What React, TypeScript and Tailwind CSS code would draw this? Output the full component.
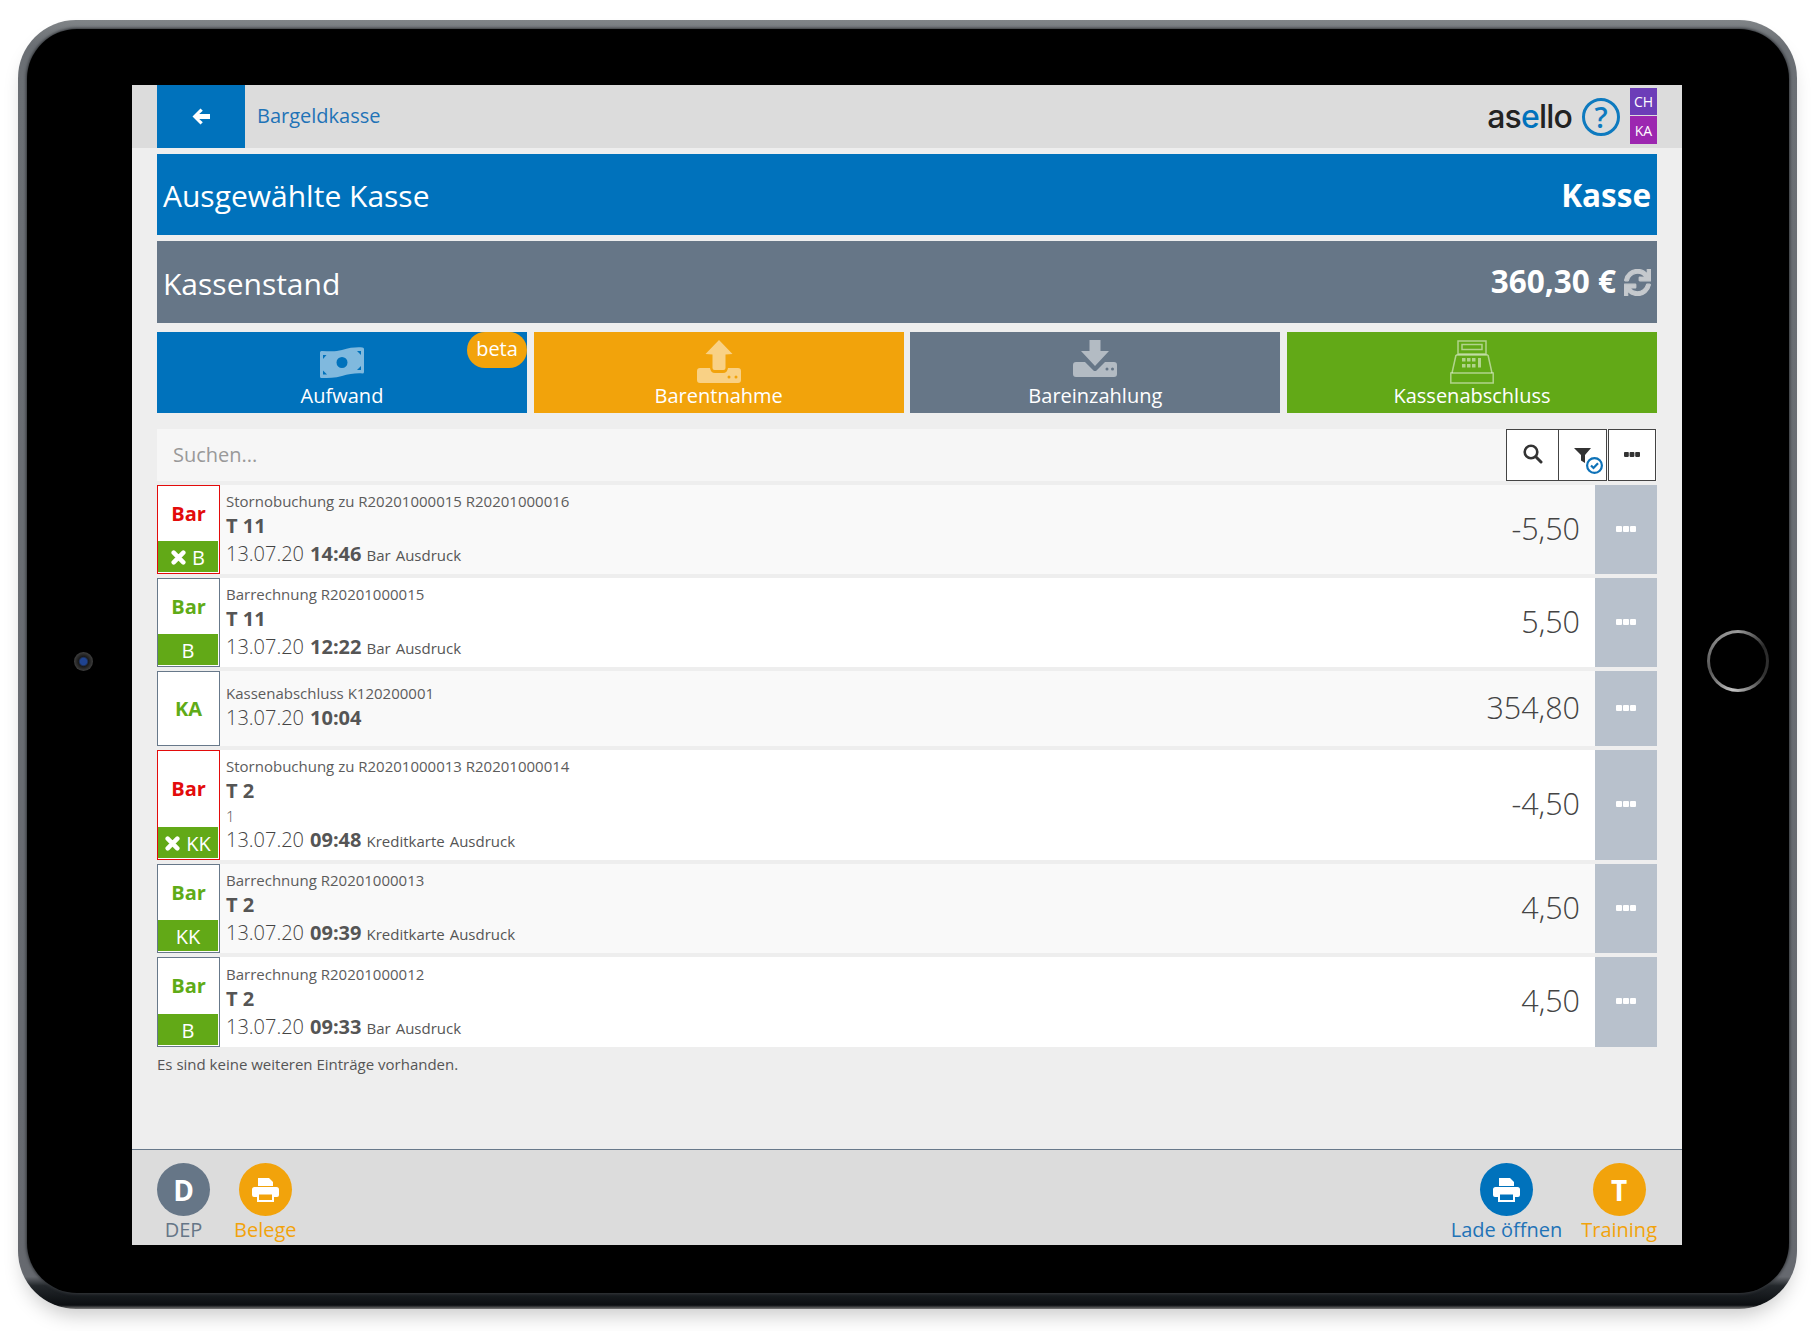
import React from 'react';
import { FaSync } from 'react-icons/fa';

type Booking = {
  tone: 'red' | 'green';
  head: string;
  pay?: string;
  storno?: boolean;
  title: string;
  ref?: string;
  note?: string;
  date: string;
  time: string;
  tags?: string[];
  amount: string;
  h: string;
  bg: string;
};

const bookings: Booking[] = [
  { tone: 'red', head: 'Bar', pay: 'B', storno: true, title: 'Stornobuchung zu R20201000015 R20201000016', ref: 'T 11', date: '13.07.20', time: '14:46', tags: ['Bar', 'Ausdruck'], amount: '-5,50', h: 'h-[89px]', bg: 'bg-[#f9f9f9]' },
  { tone: 'green', head: 'Bar', pay: 'B', title: 'Barrechnung R20201000015', ref: 'T 11', date: '13.07.20', time: '12:22', tags: ['Bar', 'Ausdruck'], amount: '5,50', h: 'h-[89px]', bg: 'bg-white' },
  { tone: 'green', head: 'KA', title: 'Kassenabschluss K120200001', date: '13.07.20', time: '10:04', amount: '354,80', h: 'h-[75px]', bg: 'bg-[#f9f9f9]' },
  { tone: 'red', head: 'Bar', pay: 'KK', storno: true, title: 'Stornobuchung zu R20201000013 R20201000014', ref: 'T 2', note: '1', date: '13.07.20', time: '09:48', tags: ['Kreditkarte', 'Ausdruck'], amount: '-4,50', h: 'h-[110px]', bg: 'bg-white' },
  { tone: 'green', head: 'Bar', pay: 'KK', title: 'Barrechnung R20201000013', ref: 'T 2', date: '13.07.20', time: '09:39', tags: ['Kreditkarte', 'Ausdruck'], amount: '4,50', h: 'h-[89px]', bg: 'bg-[#f9f9f9]' },
  { tone: 'green', head: 'Bar', pay: 'B', title: 'Barrechnung R20201000012', ref: 'T 2', date: '13.07.20', time: '09:33', tags: ['Bar', 'Ausdruck'], amount: '4,50', h: 'h-[90px]', bg: 'bg-white' },
];

function Dots({ className }: { className: string }) {
  return (
    <svg viewBox="0 0 20 6" className={className} fill="currentColor">
      <rect x="0" width="6" height="6" rx="1" />
      <rect x="7" width="6" height="6" rx="1" />
      <rect x="14" width="6" height="6" rx="1" />
    </svg>
  );
}

function ArrowIcon({ className }: { className: string }) {
  return (
    <svg viewBox="0 0 18 17" className={className} fill="currentColor">
      <path d="M8.500 0.500 L10.800 2.800 L7.200 6 H18 V11 H7.200 L10.800 14.200 L8.500 16.500 L0.500 8.500 Z" />
    </svg>
  );
}

function CrossIcon({ className }: { className: string }) {
  return (
    <svg viewBox="0 0 14 14" className={className} fill="none" stroke="currentColor" strokeWidth="4.200" strokeLinecap="round">
      <path d="M2.500 2.500 L11.500 11.500 M11.500 2.500 L2.500 11.500" />
    </svg>
  );
}

function PrintIcon({ className }: { className: string }) {
  return (
    <svg viewBox="0 0 27 24" className={className} fill="currentColor">
      <path d="M6 0 H17 L21 4 V8 H6 Z" />
      <path fillRule="evenodd" d="M2.500 9 H24.500 A2.500 2.500 0 0 1 27 11.500 V17 A2 2 0 0 1 25 19 H22 V24 H5 V19 H2 A2 2 0 0 1 0 17 V11.500 A2.500 2.500 0 0 1 2.500 9 Z M7 16.500 V22 H20 V16.500 Z" />
    </svg>
  );
}

function SearchIcon({ className }: { className: string }) {
  return (
    <svg viewBox="0 0 20 20" className={className} fill="none" stroke="currentColor">
      <circle cx="8" cy="8" r="6.300" strokeWidth="2.600" />
      <path d="M12.800 12.800 L18 18" strokeWidth="3" strokeLinecap="round" />
    </svg>
  );
}

function MoneyIcon({ className }: { className: string }) {
  return (
    <svg viewBox="0 0 44 31" className={className} fill="currentColor">
      <path
        fillRule="evenodd"
        d="M1.500 4 C9 4 15 5 22 3 C30 0.500 37 0 42.500 0.500 A1.500 1.500 0 0 1 44 2 V25 A1.500 1.500 0 0 1 42.500 26.500 C36 26 29 27 22 29 C15 31 8 31 1.500 31 A1.500 1.500 0 0 1 0 29.500 V5.500 A1.500 1.500 0 0 1 1.500 4 Z M22 10 A5.500 5.500 0 1 0 22 21 A5.500 5.500 0 1 0 22 10 Z M3 8 V12 L6.500 8 Z M41 4 H37 L41 8 Z M3 23.500 V27.500 H7 Z M41 19 L37 23 H41 Z"
      />
    </svg>
  );
}

function UploadIcon({ className }: { className: string }) {
  return (
    <svg viewBox="0 0 44 43" className={className} fill="currentColor">
      <path d="M22 0 L35.500 14 L28.500 14.500 V28 A2 2 0 0 1 26.500 30 H17.500 A2 2 0 0 1 15.500 28 V14.500 L8.500 14 Z" />
      <path
        fillRule="evenodd"
        d="M3 28 H13 C13.500 31 15 33 18 33 H26 C29 33 30.500 31 31 28 H41 A3 3 0 0 1 44 31 V40 A3 3 0 0 1 41 43 H3 A3 3 0 0 1 0 40 V31 A3 3 0 0 1 3 28 Z M32 35.500 A1.500 1.500 0 1 0 32 38.500 A1.500 1.500 0 1 0 32 35.500 Z M39 35.500 A1.500 1.500 0 1 0 39 38.500 A1.500 1.500 0 1 0 39 35.500 Z"
      />
    </svg>
  );
}

function DownloadIcon({ className }: { className: string }) {
  return (
    <svg viewBox="0 0 44 37" className={className} fill="currentColor">
      <path d="M16.500 0 H27.500 V11 H36 L22 26 L8 11 H16.500 Z" />
      <path
        fillRule="evenodd"
        d="M3 22 H12 L21 31 H23 L32 22 H41 A3 3 0 0 1 44 25 V34 A3 3 0 0 1 41 37 H3 A3 3 0 0 1 0 34 V25 A3 3 0 0 1 3 22 Z M34 27.500 A1.500 1.500 0 1 0 34 30.500 A1.500 1.500 0 1 0 34 27.500 Z M39.500 27.500 A1.500 1.500 0 1 0 39.500 30.500 A1.500 1.500 0 1 0 39.500 27.500 Z"
      />
    </svg>
  );
}

function RegisterIcon({ className }: { className: string }) {
  return (
    <svg viewBox="0 0 44 44" className={className} fill="none" stroke="currentColor" strokeWidth="1.500">
      <rect x="8" y="1" width="28" height="13" />
      <rect x="12" y="4.500" width="20" height="5" />
      <path d="M6 15 H38 M6 15 L2 33 M38 15 L42 33" />
      <rect x="0.800" y="33" width="42.400" height="10" />
      <g fill="currentColor" stroke="none">
        <rect x="12" y="18" width="3.500" height="3.500" />
        <rect x="17" y="18" width="3.500" height="3.500" />
        <rect x="22" y="18" width="3.500" height="3.500" />
        <rect x="12" y="24" width="3.500" height="3.500" />
        <rect x="17" y="24" width="3.500" height="3.500" />
        <rect x="22" y="24" width="3.500" height="3.500" />
        <rect x="28" y="18" width="3" height="9.500" />
      </g>
    </svg>
  );
}

function ActionButton({ label, bg, icon }: { label: string; bg: string; icon: React.ReactNode }) {
  return (
    <div className={`flex h-[81px] flex-col items-center text-white ${bg}`}>
      <div className="mt-[8px] flex h-[44px] items-start justify-center">{icon}</div>
      <div className="-mt-px text-[20px] leading-[26px]">{label}</div>
    </div>
  );
}

function BookingRow({ b }: { b: Booking }) {
  const red = b.tone === 'red';
  return (
    <div className={`flex ${b.h} ${b.bg}`}>
      <div className={`flex w-[63px] shrink-0 flex-col border bg-white ${red ? 'border-[#e30b0b]' : 'border-[#67788a]'}`}>
        <div className={`flex flex-1 items-center justify-center text-[20px] font-bold ${red ? 'text-[#e30b0b]' : 'text-[#5fab17]'}`}>{b.head}</div>
        {b.pay && (
          <div className="mb-px mr-[1px] flex h-[31px] items-center justify-center gap-[6px] bg-[#62a917] pt-[2px] text-[20px] text-white">
            {b.storno && <CrossIcon className="h-[15px] w-[15px]" />}
            <span>{b.pay}</span>
          </div>
        )}
      </div>
      <div className={`flex min-w-0 flex-1 flex-col justify-center pl-[6px] text-[#555] ${b.ref ? '' : 'pb-[3px]'}`}>
        <div className="text-[15px] leading-[22px] text-[#5c5c5c]">{b.title}</div>
        {b.ref && <div className="text-[20px] font-bold leading-[27px]">{b.ref}</div>}
        {b.note && <div className="mt-px -mb-px text-[15px] font-light leading-[22px]">{b.note}</div>}
        <div className={`flex items-baseline leading-[28px] ${b.ref && !b.note ? 'mt-px' : ''}`}>
          <span className="text-[20px] font-light text-[#444]">{b.date}</span>
          <span className="ml-[6px] text-[20px] font-bold">{b.time}</span>
          {b.tags?.map((t) => (
            <span key={t} className="ml-[5px] text-[15px]">{t}</span>
          ))}
        </div>
      </div>
      <div className="flex items-center pb-[2px] pr-[15px] text-[30.500px] font-light text-[#444]">{b.amount}</div>
      <div className="flex w-[62px] shrink-0 items-center justify-center bg-[#b8c1cc] pb-[2px] text-white">
        <Dots className="h-[6px] w-[20px]" />
      </div>
    </div>
  );
}

function FooterAction({ label, bg, text, children, className = '' }: { label: string; bg: string; text: string; children: React.ReactNode; className?: string }) {
  return (
    <div className={`flex flex-col items-center ${className}`}>
      <div className={`flex h-[53px] w-[53px] items-center justify-center rounded-full text-white ${bg}`}>{children}</div>
      <div className={`text-[20px] leading-[28px] ${text}`}>{label}</div>
    </div>
  );
}

export default function App() {
  return (
    <div className="h-[1331px] w-[1815px] overflow-hidden bg-white pl-[18px] pt-[20px] font-['Open_Sans',sans-serif]">
      <div className="h-[1289px] w-[1779px] rounded-[58px] bg-[linear-gradient(to_bottom,#808487_0%,#6b6f74_2%,#66696f_97.500%,#23272b_98.200%,#0b0e11_99.700%,#7a7a7a_100%)] pb-[16px] pl-[9px] pr-[8px] pt-[9px] shadow-[0_12px_20px_-6px_rgba(0,0,0,0.22)]">
        <div className="flex h-full w-full rounded-[50px] bg-black shadow-[0_0_3px_1px_#33363a]">
          <div className="flex w-[105px] shrink-0 items-center justify-center pl-[7px]">
            <div className="h-[19px] w-[19px] rounded-full bg-[radial-gradient(circle,#1f4390_24%,#1a1a1a_38%,#5f5f5f_100%)]" />
          </div>
          <div className="mt-[56px] flex h-[1160px] w-[1550px] shrink-0 flex-col bg-[#eeeeee]">
            <div className="flex h-[63px] shrink-0 items-stretch bg-[#dcdcdc] pl-[25px] pr-[25px]">
              <div className="flex w-[88px] items-center justify-center bg-[#0072bc] text-white">
                <ArrowIcon className="h-[17px] w-[18px]" />
              </div>
              <div className="ml-[12px] flex items-center pb-[2px] text-[20px] text-[#1f73b7]">Bargeldkasse</div>
              <div className="ml-auto flex items-center gap-[10px]">
                <div className="font-['Inter',sans-serif] text-[32px] font-medium leading-none tracking-tight text-[#222]">
                  as<span className="text-[#0072bc]">e</span>llo
                </div>
                <div className="flex h-[38px] w-[38px] items-center justify-center rounded-full border-[3px] border-[#0e7abf] text-[29px] font-semibold leading-none text-[#0e7abf]">?</div>
                <div className="flex flex-col gap-px self-start pt-[3px] text-[14px] text-white">
                  <div className="flex h-[27px] w-[27px] items-center justify-center bg-[#6c3db8]">CH</div>
                  <div className="flex h-[28px] w-[27px] items-center justify-center bg-[#9c27b0]">KA</div>
                </div>
              </div>
            </div>

            <div className="flex flex-col px-[25px]">
              <div className="mt-[6px] flex h-[81px] items-center justify-between bg-[#0072bc] px-[6px] text-white">
                <div className="pt-[2px] text-[30px]">Ausgewählte Kasse</div>
                <div className="text-[31.500px] font-bold">Kasse</div>
              </div>
              <div className="mt-[6px] flex h-[82px] items-center justify-between bg-[#667687] px-[6px] text-white">
                <div className="pt-[2px] text-[30px]">Kassenstand</div>
                <div className="flex items-center gap-[8px]">
                  <span className="pb-[2px] text-[31.500px] font-bold">360,30 €</span>
                  <FaSync className="h-[27px] w-[27px] text-[#c5c9cd]" stroke="currentColor" strokeWidth={22} />
                </div>
              </div>

              <div className="mt-[9px] grid grid-cols-4 gap-[6.670px]">
                <div className="relative">
                  <ActionButton label="Aufwand" bg="bg-[#0072bc]" icon={<MoneyIcon className="mt-[7px] h-[31px] w-[44px] text-white/50" />} />
                  <div className="absolute right-0 top-0 flex h-[36px] w-[60px] items-center justify-center rounded-[18px] bg-[#f2a30b] pb-[2px] text-[20px] text-white">beta</div>
                </div>
                <ActionButton label="Barentnahme" bg="bg-[#f2a30b]" icon={<UploadIcon className="h-[43px] w-[44px] text-white/50" />} />
                <ActionButton label="Bareinzahlung" bg="bg-[#667687]" icon={<DownloadIcon className="h-[37px] w-[44px] text-white/50" />} />
                <ActionButton label="Kassenabschluss" bg="bg-[#62a917]" icon={<RegisterIcon className="h-[44px] w-[44px] text-white/50" />} />
              </div>

              <div className="mt-[16px] flex h-[52px] items-stretch bg-[#f6f6f6]">
                <div className="flex flex-1 items-center pl-[16px] text-[20px] text-[#999]">Suchen...</div>
                <div className="flex w-[53px] items-center justify-center border border-[#444] bg-white pb-[2px] text-[#333]"><SearchIcon className="h-[20px] w-[20px]" /></div>
                <div className="relative flex w-[48px] items-center justify-center border border-l-0 border-[#444] bg-white text-[#333]">
                  <svg viewBox="0 0 17 15" className="h-[15px] w-[17px]" fill="currentColor">
                    <path d="M0 0 H17 L11 7 V15 L7 12.500 V7 Z" />
                  </svg>
                  <svg viewBox="0 0 17 17" className="absolute bottom-[6px] right-[3px] h-[17px] w-[17px]" fill="none">
                    <circle cx="8.500" cy="8.500" r="7.400" fill="#fff" stroke="#0e72b8" strokeWidth="2.200" />
                    <path d="M5 8.500 L7.500 11 L12 6.200" stroke="#0e72b8" strokeWidth="2.200" />
                  </svg>
                </div>
                <div className="ml-px flex w-[48px] items-center justify-center border border-[#444] bg-white pb-[2px] text-[#333]"><Dots className="h-[5px] w-[16px]" /></div>
                <div className="w-px" />
              </div>

              <div className="mt-[4px] flex flex-col gap-[4px]">
                {bookings.map((b) => (
                  <BookingRow key={b.title + b.time} b={b} />
                ))}
              </div>
              <div className="mt-[6px] text-[15px] leading-[22px] text-[#555]">Es sind keine weiteren Einträge vorhanden.</div>
            </div>

            <div className="mt-auto flex h-[96px] shrink-0 items-start border-t border-[#67788a] bg-[#dcdcdc] px-[25px] pt-[13px]">
              <FooterAction label="DEP" bg="bg-[#667687]" text="text-[#667687]">
                <span className="text-[28px] font-bold leading-none">D</span>
              </FooterAction>
              <FooterAction label="Belege" bg="bg-[#f2a30b]" text="text-[#f2a30b]" className="ml-[24px]">
                <PrintIcon className="h-[24px] w-[27px]" />
              </FooterAction>
              <FooterAction label="Lade öffnen" bg="bg-[#0072bc]" text="text-[#1f73b7]" className="ml-auto">
                <PrintIcon className="h-[24px] w-[27px]" />
              </FooterAction>
              <FooterAction label="Training" bg="bg-[#f2a30b]" text="text-[#f2a30b]" className="ml-[19px]">
                <span className="text-[28px] font-bold leading-none">T</span>
              </FooterAction>
            </div>
          </div>
          <div className="flex flex-1 items-center justify-center pl-[4px]">
            <div className="flex h-[62px] w-[62px] items-center justify-center rounded-full bg-[conic-gradient(#9a9a9a_0deg,#2a2a2a_60deg,#333_120deg,#c4c4c4_190deg,#555_250deg,#8a8a8a_320deg,#9a9a9a_360deg)]">
              <div className="h-[56px] w-[56px] rounded-full bg-black" />
            </div>
          </div>
        </div>
      </div>
    </div>
  );
}
